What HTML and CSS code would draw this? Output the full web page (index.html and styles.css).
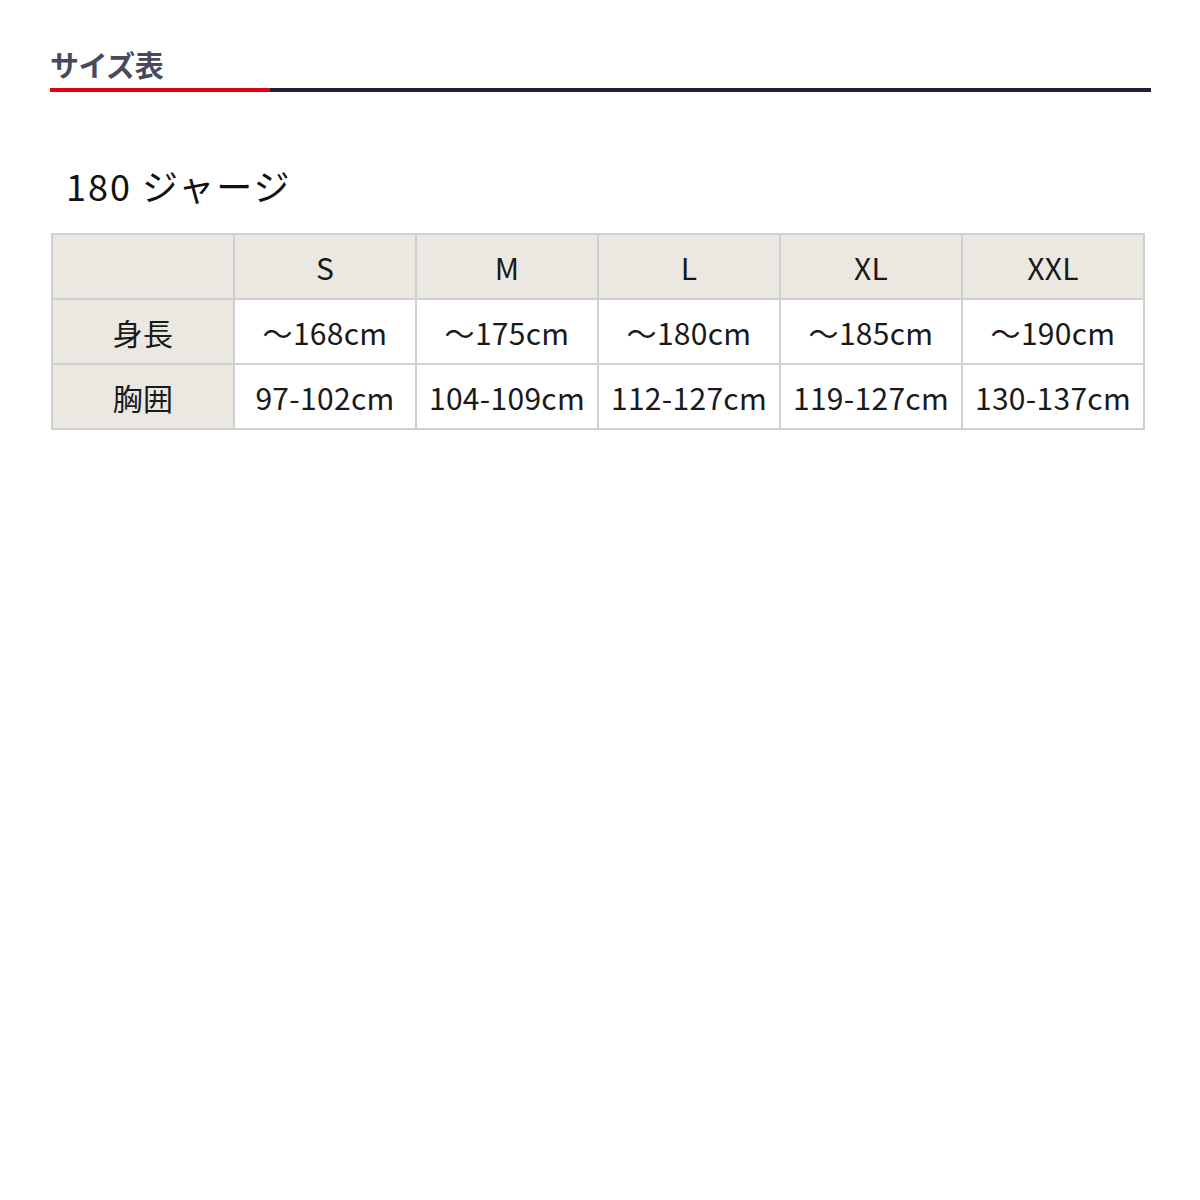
FILE: index.html
```html
<!DOCTYPE html>
<html lang="ja">
<head>
<meta charset="utf-8">
<link rel="stylesheet" href="styles.css">
</head>
<body>
<div class="page">
  <div class="section-head">
    <h2 class="section-title">サイズ表</h2>
    <div class="rule"><span class="rule-red"></span><span class="rule-navy"></span></div>
  </div>
  <h3 class="product">180 ジャージ</h3>
  <table class="size-table">
    <tr class="head">
      <th class="label"></th><th>S</th><th>M</th><th>L</th><th>XL</th><th>XXL</th>
    </tr>
    <tr>
      <th class="label">身長</th><td>～168cm</td><td>～175cm</td><td>～180cm</td><td>～185cm</td><td>～190cm</td>
    </tr>
    <tr>
      <th class="label">胸囲</th><td>97-102cm</td><td>104-109cm</td><td>112-127cm</td><td>119-127cm</td><td>130-137cm</td>
    </tr>
  </table>
</div>
</body>
</html>
```

FILE: styles.css
```css
html, body { margin: 0; padding: 0; background: #fff; }
body { font-family: "Noto Sans CJK JP", "Noto Sans", sans-serif; color: #111; }
.page { padding: 46px 49px 0 50px; }
.section-title {
  margin: 0;
  font-size: 29px;
  font-weight: 700;
  color: #474a5c;
  line-height: 36px;
  letter-spacing: -0.5px;
}
.rule { display: flex; height: 4px; margin-top: 6px; }
.rule-red { width: 220px; background: #e0000f; }
.rule-navy { flex: 1; background: #1f2236; }
.product {
  margin: 70px 0 0 16px;
  font-size: 36px;
  font-weight: 400;
  line-height: 46px;
  letter-spacing: 2px;
  color: #111;
}
.size-table {
  margin-top: 25px;
  margin-left: 1px;
  border-collapse: collapse;
  width: 1094px;
  table-layout: fixed;
}
.size-table th, .size-table td {
  border: 2px solid #d0d0d0;
  height: 63px;
  padding: 0;
  text-align: center;
  font-size: 30px;
  font-weight: 400;
  color: #1a1a1a;
  white-space: nowrap;
  letter-spacing: 0.3px;
}
.size-table .head th { background: #ebe8e1; }
.size-table th.label { background: #ebe8e1; }
.size-table td { background: #fff; }
```
